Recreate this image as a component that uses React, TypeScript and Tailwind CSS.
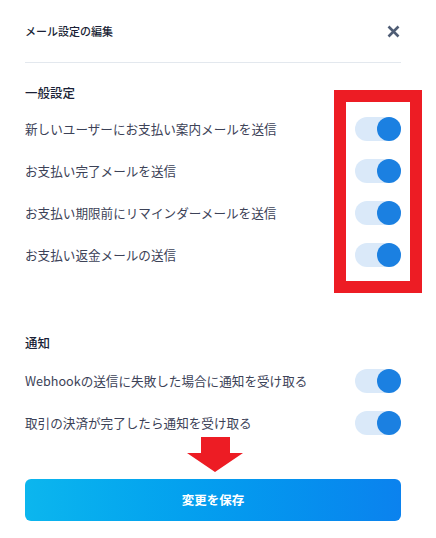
import React from "react";

const Toggle = () => (
  <div className="flex h-[24px] w-[46px] items-center rounded-full bg-[#dae9f9]">
    <div className="ml-auto h-[24px] w-[24px] rounded-full bg-[#1b80e1]" />
  </div>
);

const Row = ({ label }: { label: string }) => (
  <div className="flex h-[42px] items-center justify-between">
    <span className="text-[12.6px] leading-[18px] text-[#3c4257]">{label}</span>
    <Toggle />
  </div>
);

export default function App() {
  return (
    <div
      className="relative h-[538px] w-[436px] overflow-hidden bg-white pl-[25px] pr-[35px]"
      style={{ fontFamily: '"Noto Sans CJK JP", "Noto Sans", sans-serif' }}
    >
      <div className="flex items-center justify-between pb-[22px] pt-[22px]">
        <span className="text-[11px] leading-[18px] font-medium text-[#1a1f36]">メール設定の編集</span>
        <svg width="13" height="13" viewBox="0 0 13 13" className="mr-[1px]">
          <path d="M1.5 1.5 L11.5 11.5 M11.5 1.5 L1.5 11.5" stroke="#4f5d75" strokeWidth="2.6" strokeLinecap="butt" />
        </svg>
      </div>
      <div className="h-px bg-[#e3e8ee]" />

      <div className="mt-[21px] text-[12.5px] leading-[18px] font-medium text-[#1a1f36]">一般設定</div>
      <div className="mt-[6px] flex flex-col">
        <Row label="新しいユーザーにお支払い案内メールを送信" />
        <Row label="お支払い完了メールを送信" />
        <Row label="お支払い期限前にリマインダーメールを送信" />
        <Row label="お支払い返金メールの送信" />
      </div>

      <div className="mt-[58px] text-[12.5px] leading-[18px] font-medium text-[#1a1f36]">通知</div>
      <div className="mt-[8px] flex flex-col">
        <Row label="Webhookの送信に失敗した場合に通知を受け取る" />
        <Row label="取引の決済が完了したら通知を受け取る" />
      </div>

      <button className="mt-[35px] flex h-[42px] w-full items-center justify-center rounded-[6px] bg-gradient-to-r from-[#0cb6ee] to-[#0b82ee] text-[12.5px] font-bold text-white">
        変更を保存
      </button>

      <div className="absolute left-[334px] top-[90px] h-[203px] w-[88px] border-[12px] border-[#ed1c24]" />
      <svg className="absolute left-[187px] top-[437px]" width="56" height="35" viewBox="0 0 56 35">
        <polygon points="14,0 43,0 43,16 56,16 28,35 0,16 14,16" fill="#ed1c24" />
      </svg>
    </div>
  );
}
